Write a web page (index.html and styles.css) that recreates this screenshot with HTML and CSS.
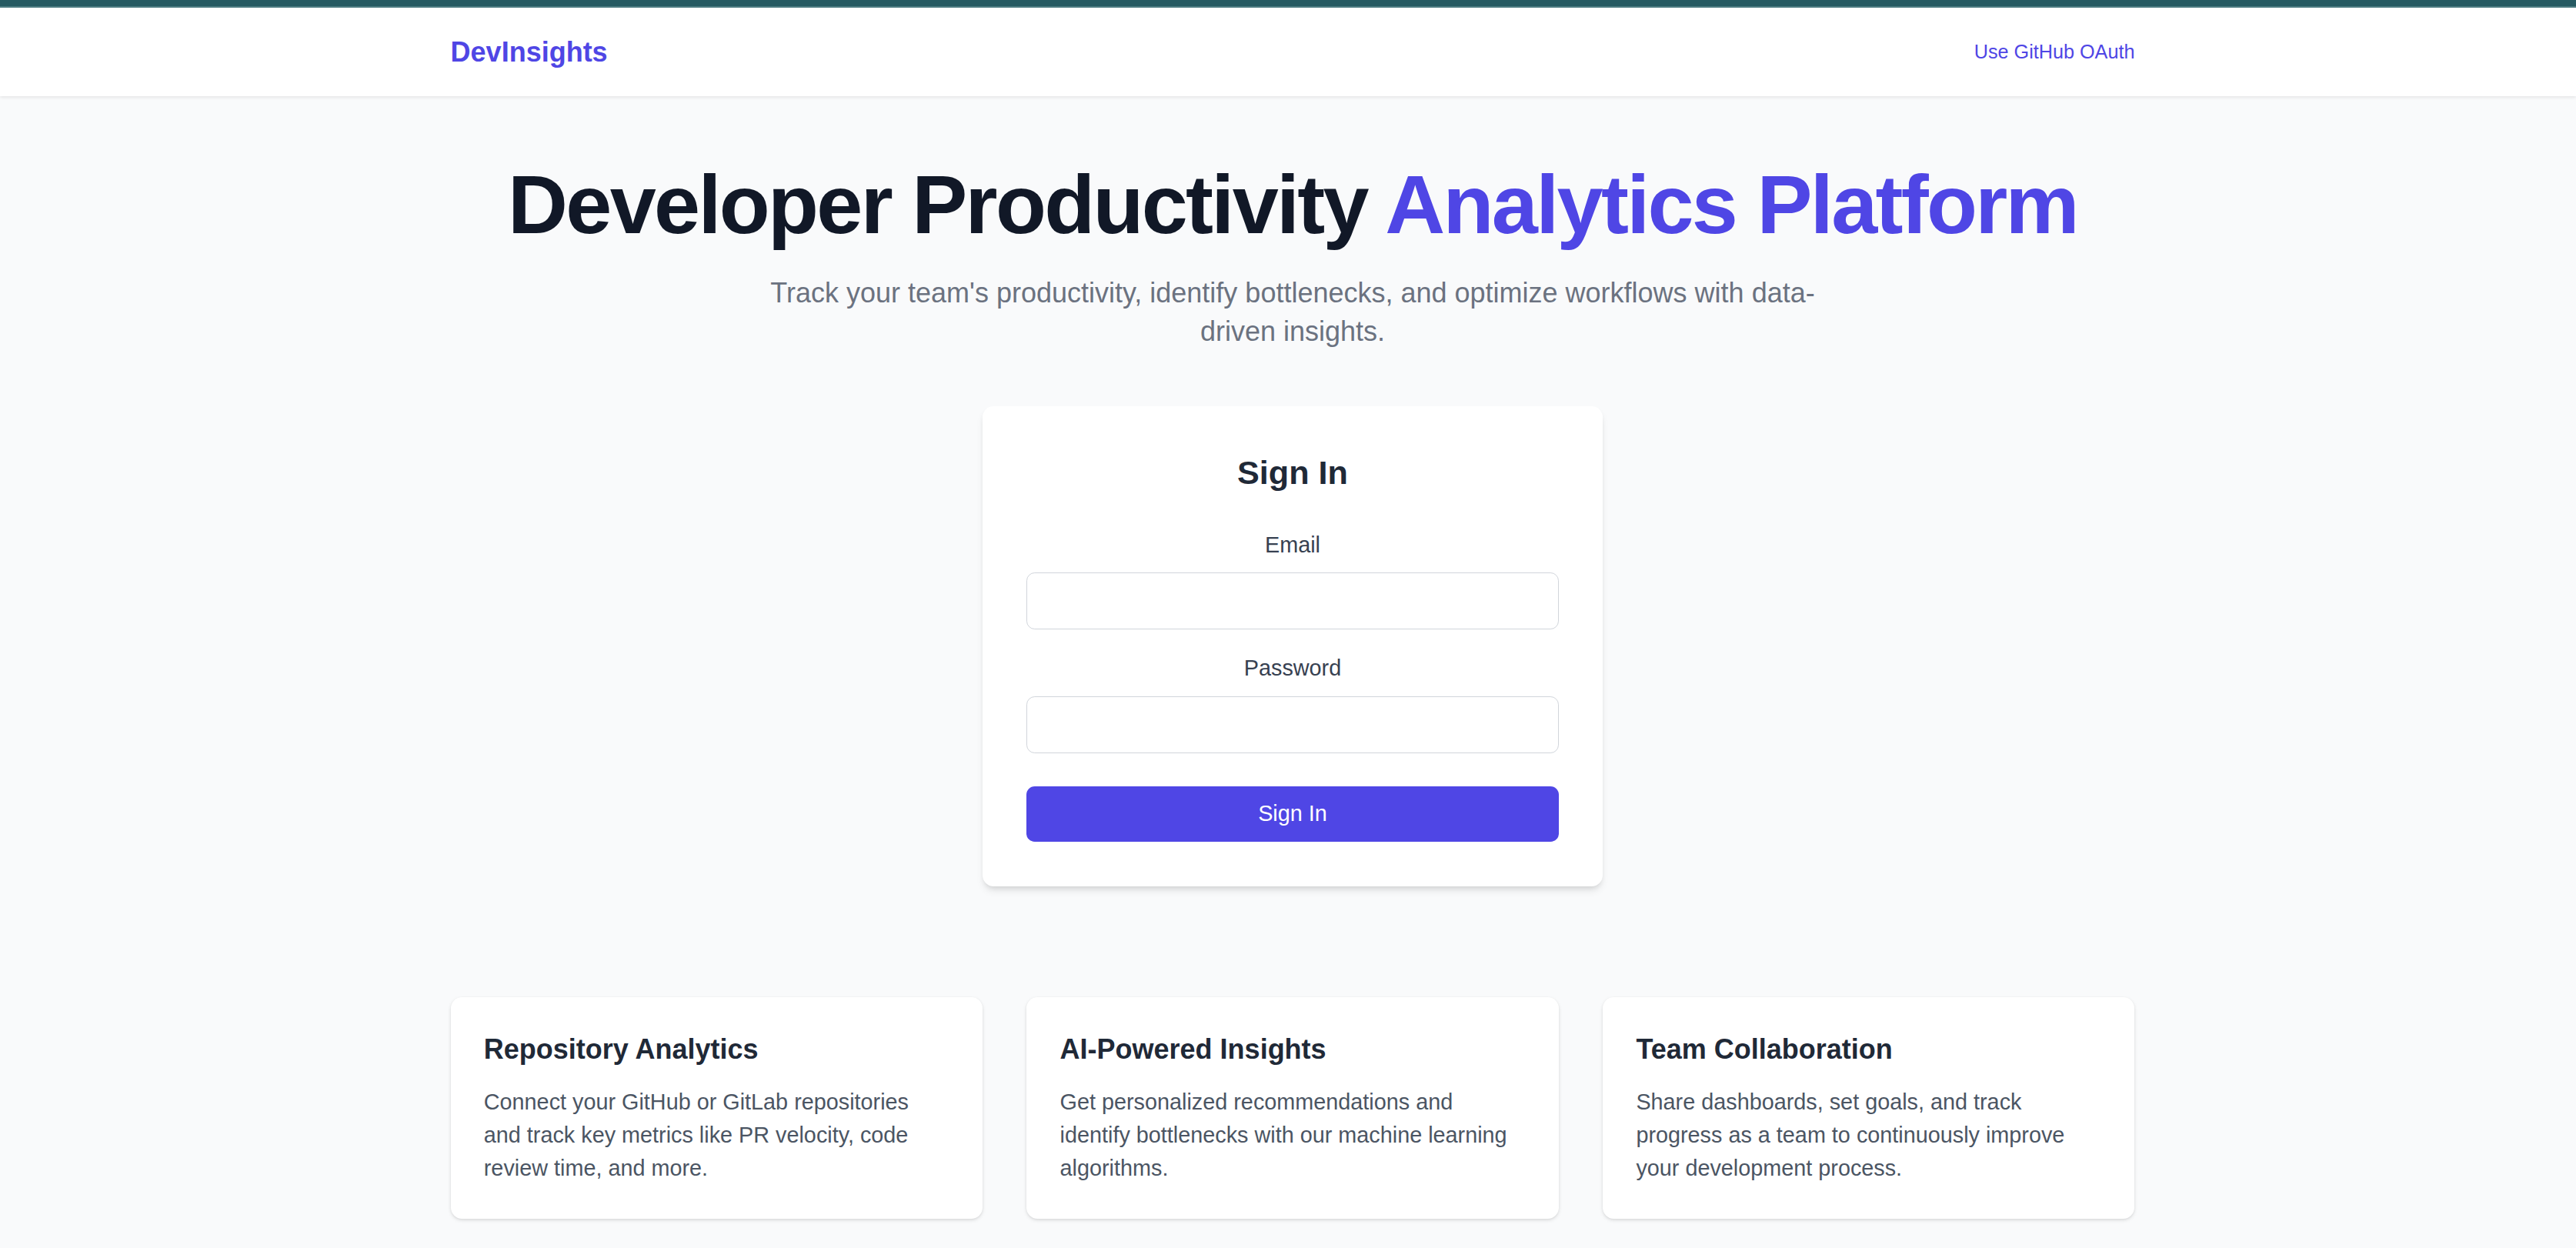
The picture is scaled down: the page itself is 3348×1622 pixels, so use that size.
FILE: index.html
```html
<!DOCTYPE html>
<html lang="en">
<head>
<meta charset="utf-8">
<title>DevInsights</title>
<link rel="stylesheet" href="styles.css">
</head>
<body>
<div class="topband"></div>
<header class="site-header">
  <div class="container header-inner">
    <a class="logo" href="#">DevInsights</a>
    <a class="oauth" href="#">Use GitHub OAuth</a>
  </div>
</header>
<main class="container main">
  <section class="hero">
    <h1 class="hero-title">Developer Productivity <span class="accent">Analytics Platform</span></h1>
    <p class="hero-sub">Track your team's productivity, identify bottlenecks, and optimize workflows with data-driven insights.</p>
  </section>
  <section class="login-card">
    <h2 class="login-title">Sign In</h2>
    <form class="login-form">
      <div class="field">
        <label class="field-label" for="email">Email</label>
        <input class="field-input" id="email" type="email">
      </div>
      <div class="field">
        <label class="field-label" for="password">Password</label>
        <input class="field-input" id="password" type="password">
      </div>
      <button class="btn-primary" type="button">Sign In</button>
    </form>
  </section>
  <section class="features">
    <div class="feature-card">
      <h3 class="feature-title">Repository Analytics</h3>
      <p class="feature-text">Connect your GitHub or GitLab repositories and track key metrics like PR velocity, code review time, and more.</p>
    </div>
    <div class="feature-card">
      <h3 class="feature-title">AI-Powered Insights</h3>
      <p class="feature-text">Get personalized recommendations and identify bottlenecks with our machine learning algorithms.</p>
    </div>
    <div class="feature-card">
      <h3 class="feature-title">Team Collaboration</h3>
      <p class="feature-text">Share dashboards, set goals, and track progress as a team to continuously improve your development process.</p>
    </div>
  </section>
</main>
</body>
</html>
```
FILE: styles.css
```css
* { box-sizing: border-box; }
html, body { margin: 0; padding: 0; }
body {
  background: #f9fafb;
  font-family: "Liberation Sans", Arial, sans-serif;
  color: #111827;
  overflow: hidden;
}
.topband {
  height: 10px;
  background: #265a62;
  border-bottom: 2px solid #4d7c82;
}
.site-header {
  background: #ffffff;
  box-shadow: 0 2px 4px rgba(0, 0, 0, 0.08);
  position: relative;
}
.container {
  max-width: 2304px;
  margin: 0 auto;
  padding: 0 51.6px 0 63.6px;
}
.header-inner {
  height: 115.2px;
  display: flex;
  align-items: center;
  justify-content: space-between;
}
.logo {
  font-size: 36px;
  font-weight: 700;
  color: #4f46e5;
  text-decoration: none;
}
.oauth {
  font-size: 25.2px;
  color: #4f46e5;
  text-decoration: none;
}
.main {
  padding-top: 86.4px;
  padding-bottom: 86.4px;
}
.hero { text-align: center; }
.hero-title {
  margin: 0;
  font-size: 108px;
  line-height: 108px;
  font-weight: 700;
  letter-spacing: -0.025em;
  color: #111827;
}
.accent { color: #4f46e5; }
.hero-sub {
  max-width: 1382.4px;
  margin: 36px auto 0;
  font-size: 36px;
  line-height: 50.4px;
  color: #6b7280;
}
.login-card {
  width: 806.4px;
  margin: 72px auto 0;
  background: #ffffff;
  border-radius: 14.4px;
  box-shadow: 0 7px 11px -2px rgba(0, 0, 0, 0.1), 0 4px 7px -3px rgba(0, 0, 0, 0.1);
  padding: 57.6px;
}
.login-title {
  margin: 0 0 43.2px;
  text-align: center;
  font-size: 43.2px;
  line-height: 57.6px;
  font-weight: 700;
  color: #1f2937;
}
.login-form { display: flex; flex-direction: column; }
.field { margin-bottom: 28.8px; display: flex; flex-direction: column; }
.field-label {
  text-align: center;
  font-size: 28.8px;
  line-height: 43.2px;
  color: #374151;
  margin-bottom: 14.4px;
}
.field-input {
  height: 74px;
  border: 1.8px solid #d1d5db;
  border-radius: 10.8px;
  background: #fff;
  font: inherit;
  font-size: 28.8px;
  padding: 0 21.6px;
}
.btn-primary {
  margin-top: 14.4px;
  height: 72px;
  border: none;
  border-radius: 10.8px;
  background: #4f46e5;
  color: #ffffff;
  font-family: inherit;
  font-size: 28.8px;
  line-height: 43.2px;
}
.features {
  margin-top: 144px;
  display: grid;
  grid-template-columns: repeat(3, 1fr);
  gap: 57.6px;
}
.feature-card {
  background: #ffffff;
  border-radius: 14.4px;
  box-shadow: 0 2px 5px rgba(0, 0, 0, 0.1), 0 1px 3px rgba(0, 0, 0, 0.06);
  padding: 43.2px;
}
.feature-title {
  margin: 0 0 21.6px;
  font-size: 36px;
  line-height: 50.4px;
  font-weight: 700;
  color: #1f2937;
}
.feature-text {
  margin: 0;
  font-size: 28.8px;
  line-height: 43.2px;
  color: #4b5563;
}
```
